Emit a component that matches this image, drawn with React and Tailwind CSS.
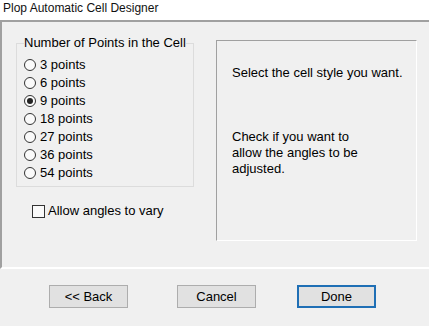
import React, { useState } from "react";

const points = [3, 6, 9, 18, 27, 36, 54];

function Radio({ checked }) {
  return (
    <span className="w-[12px] h-[12px] rounded-full border border-[#333] bg-[#fafafa] flex items-center justify-center shrink-0">
      {checked && <span className="w-[6px] h-[6px] rounded-full bg-[#222]" />}
    </span>
  );
}

function Button({ children, primary, className }) {
  return (
    <button
      className={
        "w-[79px] h-[23px] bg-[#e1e1e1] text-[13px] text-black flex items-center justify-center " +
        (primary ? "border-2 border-[#1f6fb5]" : "border border-[#adadad]") +
        " " +
        className
      }
    >
      {children}
    </button>
  );
}

export default function App() {
  const [selected, setSelected] = useState(9);
  const [vary, setVary] = useState(false);

  return (
    <div
      className="w-[429px] h-[326px] bg-[#f0f0f0] text-black overflow-hidden"
      style={{ fontFamily: '"Liberation Sans", Arial, sans-serif' }}
    >
      {/* Title */}
      <div className="h-[20px] bg-white text-[12px] leading-[16px] pl-[3px] text-[#111]">
        Plop Automatic Cell Designer
      </div>

      {/* Main panel */}
      <div className="h-[249px] border-t-2 border-l-2 border-b-2 border-t-[#a0a0a0] border-l-[#a0a0a0] border-b-white flex">
        {/* Left column */}
        <div className="w-[214px] shrink-0">
          <fieldset className="ml-[14px] mt-[13px] w-[178px] border border-[#dcdcdc] px-[7px] pb-[4px]">
            <legend className="text-[13px] leading-[16px] px-0">
              Number of Points in the Cell
            </legend>
            <div className="mt-[5px] flex flex-col">
              {points.map((p) => (
                <div
                  key={p}
                  onClick={() => setSelected(p)}
                  className="h-[18px] flex items-center gap-[4px] text-[13px] cursor-default"
                >
                  <Radio checked={selected === p} />
                  <span>{p} points</span>
                </div>
              ))}
            </div>
          </fieldset>

          {/* Checkbox */}
          <div
            onClick={() => setVary(!vary)}
            className="ml-[30px] mt-[16px] h-[16px] flex items-center gap-[3px] text-[13px]"
          >
            <span className="w-[13px] h-[13px] border border-[#333] bg-[#fafafa] shrink-0 flex items-center justify-center text-[10px]">
              {vary ? "✓" : ""}
            </span>
            <span>Allow angles to vary</span>
          </div>
        </div>

        {/* Right info box */}
        <div className="mt-[18px] w-[201px] h-[201px] border border-t-[#a0a0a0] border-l-[#a0a0a0] border-r-white border-b-white pl-[15px] pt-[24px] text-[13px] leading-[16px]">
          <p>Select the cell style you want.</p>
          <p className="mt-[48px] w-[150px]">
            Check if you want to allow the angles to be adjusted.
          </p>
        </div>
      </div>

      {/* Buttons */}
      <div className="flex pt-[16px]">
        <Button className="ml-[49px]">&lt;&lt; Back</Button>
        <Button className="ml-[49px]">Cancel</Button>
        <Button primary className="ml-[41px]">Done</Button>
      </div>
    </div>
  );
}
